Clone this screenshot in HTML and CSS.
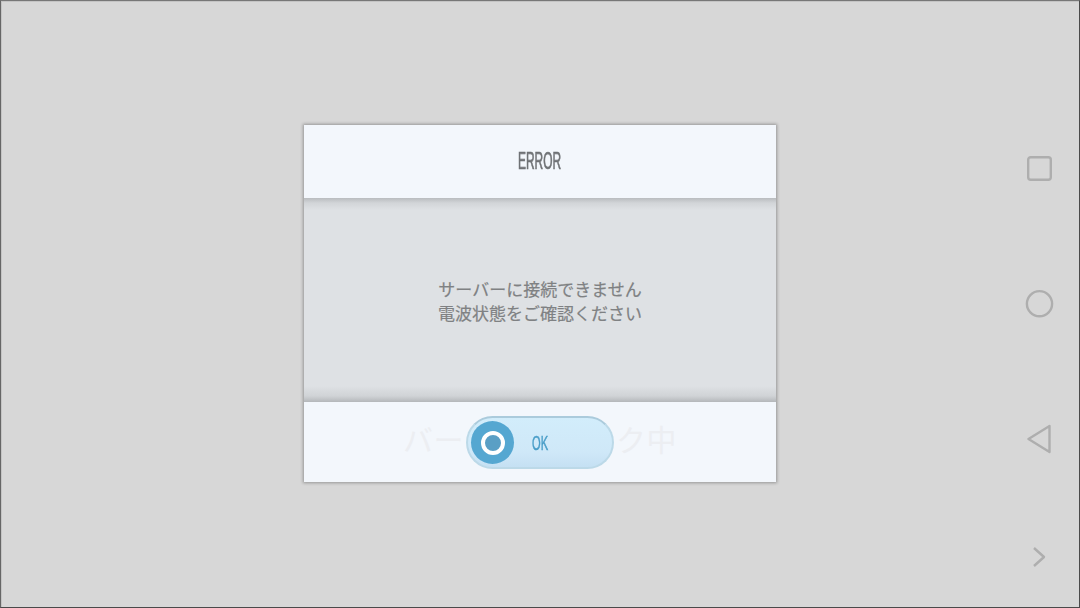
FILE: index.html
```html
<!DOCTYPE html>
<html lang="ja">
<head>
  <meta charset="UTF-8">
  <title>ERROR</title>
  <link rel="stylesheet" href="styles.css">
</head>
<body>
<div class="screen">
  <div class="dialog">
    <div class="dialog-head"><span class="dialog-title">ERROR</span></div>
    <div class="dialog-body">
      <p>サーバーに接続できません</p>
      <p>電波状態をご確認ください</p>
    </div>
    <div class="dialog-foot">
      <span class="ghost-text">バーチャルリンク中</span>
      <button class="ok-btn">
        <span class="ok-knob"><span class="ok-ring"></span></span>
        <span class="ok-label">OK</span>
      </button>
    </div>
  </div>
  <div class="nav">
    <svg class="nav-icon" width="30" height="30" viewBox="0 0 30 30"><rect x="4.200" y="3.200" width="22.600" height="22.600" rx="2.500"/></svg>
    <svg class="nav-icon" width="30" height="30" viewBox="0 0 30 30"><circle cx="15.500" cy="14.700" r="12.600"/></svg>
    <svg class="nav-icon" width="30" height="30" viewBox="0 0 30 30"><path d="M25.500 2V28L4.500 15Z"/></svg>
    <svg class="nav-icon nav-more" width="30" height="30" viewBox="0 0 30 30"><path d="M10 6L20 15L10 24"/></svg>
  </div>
</div>
</body>
</html>
```

FILE: styles.css
```css
* {
  box-sizing: border-box;
}

body {
  margin: 0;
  width: 1080px;
  height: 608px;
  overflow: hidden;
  background: #d7d7d7;
  font-family: "Noto Sans CJK JP", "Liberation Sans", sans-serif;
}

.screen {
  position: relative;
  width: 1080px;
  height: 608px;
  padding-top: 124px;
  display: flex;
  justify-content: center;
  align-items: flex-start;
  border: 1px solid #4a4a4a;
  border-top-color: #777;
  border-left-color: #666;
  box-shadow: inset 1px 1px 0 #c4c4c4;
}

.dialog {
  width: 472px;
  height: 357px;
  display: flex;
  flex-direction: column;
  background: #f3f7fc;
  box-shadow: 0 0 3px 1px rgba(0, 0, 0, 0.3);
}

.dialog-head {
  height: 73px;
  display: flex;
  align-items: center;
  justify-content: center;
}

.dialog-title {
  font-family: "Liberation Sans", sans-serif;
  font-size: 23px;
  color: #6f7275;
  transform: scaleX(0.52);
  -webkit-text-stroke: 0.7px #6f7275;
}

.dialog-body {
  height: 204px;
  padding-top: 2px;
  display: flex;
  flex-direction: column;
  align-items: center;
  justify-content: center;
  background: linear-gradient(#b9bcbf 0, #d2d5d8 5px, #dee1e4 12px, #dee1e4 188px, #d0d3d6 198px, #b4b7ba 204px);
  color: #7f8183;
  font-size: 17px;
  line-height: 24px;
  -webkit-text-stroke: 0.2px #7f8183;
}

.dialog-body p {
  margin: 0;
}

.dialog-foot {
  position: relative;
  flex: 1;
  padding-bottom: 8px;
  display: flex;
  align-items: center;
  justify-content: center;
}

.ghost-text {
  font-size: 30px;
  letter-spacing: 0.5px;
  color: #eceef2;
  line-height: 1;
  white-space: nowrap;
}

.ok-btn {
  position: absolute;
  left: 162px;
  top: 14px;
  width: 148px;
  height: 53px;
  padding: 0 0 0 3px;
  display: flex;
  align-items: center;
  border: 2px solid #bcd9e8;
  border-top-color: #abcbdc;
  border-radius: 27px;
  background: linear-gradient(#d2edfb, #cfe8f8 70%, #c5e0f3);
}

.ok-knob {
  width: 43px;
  height: 43px;
  border-radius: 50%;
  background: #55a7d1;
  display: flex;
  align-items: center;
  justify-content: center;
}

.ok-ring {
  width: 24px;
  height: 24px;
  border: 4px solid #fff;
  border-radius: 50%;
  background: #5a9fc5;
}

.ok-label {
  margin-left: 18px;
  font-family: "Liberation Sans", sans-serif;
  font-size: 21px;
  color: #4a9ec8;
  transform: scaleX(0.53);
  transform-origin: left center;
  -webkit-text-stroke: 0.5px #4a9ec8;
}

.nav {
  position: absolute;
  top: 153px;
  left: 1023px;
  display: flex;
  flex-direction: column;
  gap: 105px;
}

.nav-icon {
  display: block;
  fill: none;
  stroke: #aeaeae;
  stroke-width: 2.4;
  stroke-linejoin: round;
  filter: blur(0.3px);
}

.nav-more {
  margin-top: -17px;
}
```
